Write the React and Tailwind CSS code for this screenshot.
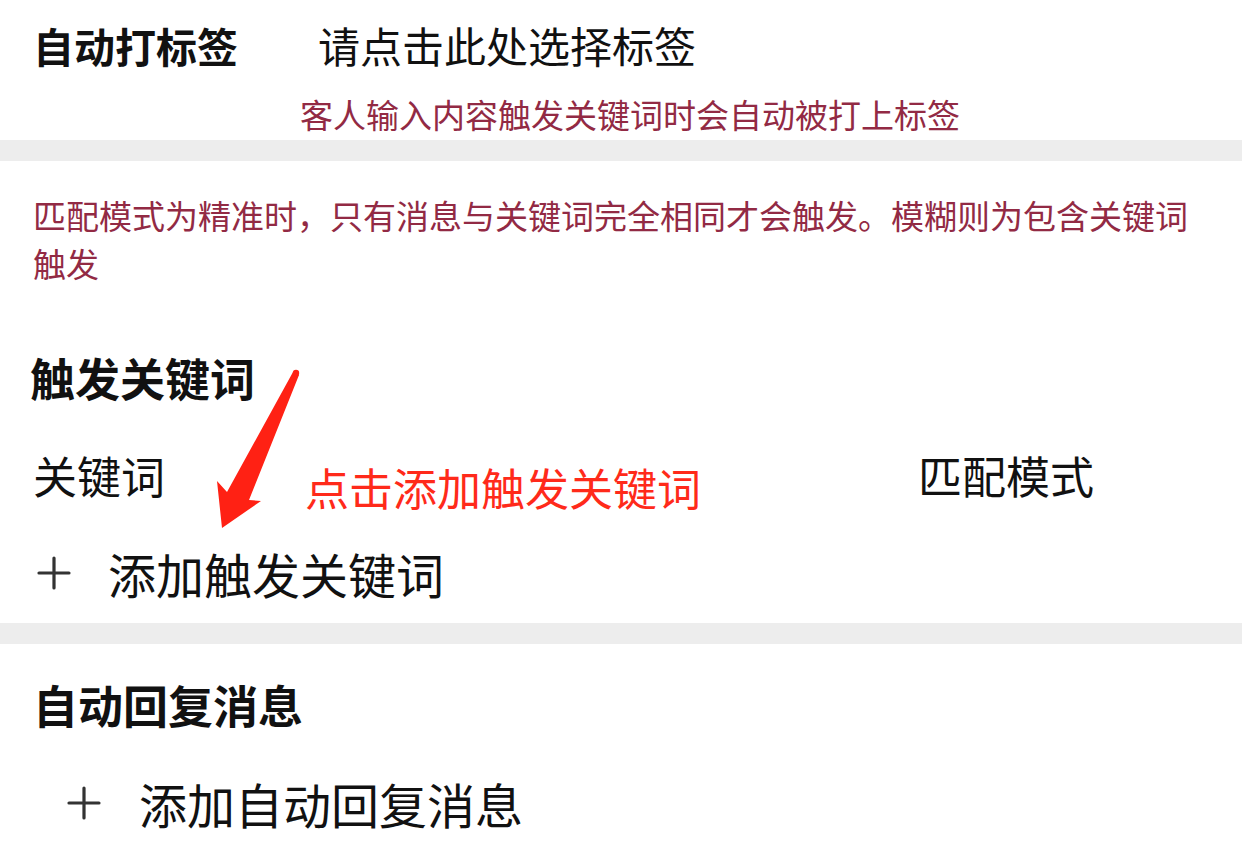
const cjk = { fontFamily: '"Noto Sans CJK SC", "Noto Sans", sans-serif' };

const PlusIcon = ({ className }) => (
  <svg viewBox="0 0 34 34" className={className}>
    <path d="M17 2v30M2 17h30" stroke="#333" strokeWidth="3.2" strokeLinecap="round" fill="none" />
  </svg>
);

const Band = () => <div className="h-[21px] bg-[#ededed]" />;

export default function App() {
  return (
    <div className="w-[1242px] h-[866px] bg-white overflow-hidden text-[#111]" style={cjk}>
      {/* auto tag */}
      <div className="pt-[16px] pb-[3px]">
        <div className="flex items-center h-[58px] px-[33px]">
          <span className="text-[41px] font-bold leading-[58px] w-[285px]">自动打标签</span>
          <span className="text-[42px] leading-[58px]">请点击此处选择标签</span>
        </div>
        <div className="mt-[17px] h-[46px] pl-[300px] text-[33px] leading-[46px] text-[#922a44]">
          客人输入内容触发关键词时会自动被打上标签
        </div>
      </div>

      <Band />

      {/* trigger keywords */}
      <div className="relative pb-[20px]">
        <p className="pt-[30px] px-[33px] text-[33px] leading-[48px] text-[#922a44]">
          匹配模式为精准时，只有消息与关键词完全相同才会触发。模糊则为包含关键词触发
        </p>

        <div className="mt-[63px] h-[56px] px-[30px] text-[45px] font-bold leading-[56px]">触发关键词</div>

        <div className="relative mt-[41px] flex items-center h-[56px] px-[33px] text-[44px] leading-[56px]">
          <span className="w-[885px]">关键词</span>
          <span>匹配模式</span>
          <span className="absolute left-[305px] top-[12px] text-[44px] leading-[56px] text-[#ff2a1a]">
            点击添加触发关键词
          </span>
        </div>

        <div className="mt-[40px] flex items-center h-[60px] pl-[37px]">
          <PlusIcon className="w-[34px] h-[34px]" />
          <span className="ml-[37px] text-[48px] leading-[60px]">添加触发关键词</span>
        </div>

        <svg className="absolute left-[210px] top-[207px] w-[95px] h-[165px]" viewBox="0 0 95 165">
          <path d="M83 4 L17 124 L7 113 L12 160 L51 133 L39 132 L89 7 Z" fill="#ff2114" />
          <circle cx="86" cy="5" r="3.2" fill="#ff2114" />
        </svg>
      </div>

      <Band />

      {/* auto reply */}
      <div>
        <div className="mt-[33px] h-[56px] px-[33px] text-[45px] font-bold leading-[56px]">自动回复消息</div>
        <div className="mt-[40px] flex items-center h-[60px] pl-[67px]">
          <PlusIcon className="w-[34px] h-[34px]" />
          <span className="ml-[38px] text-[48px] leading-[60px]">添加自动回复消息</span>
        </div>
      </div>
    </div>
  );
}
